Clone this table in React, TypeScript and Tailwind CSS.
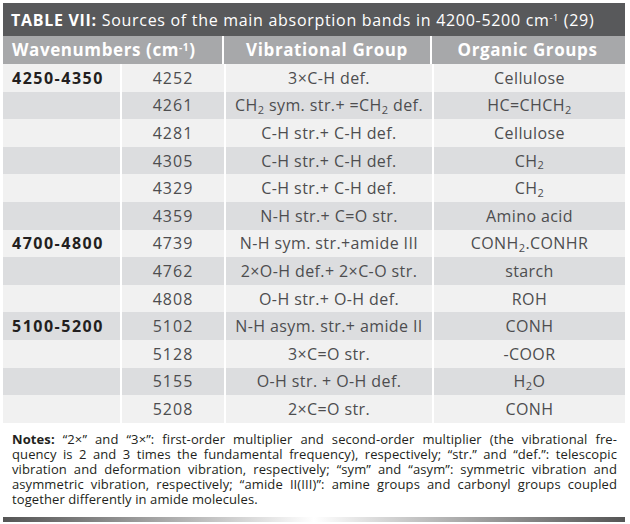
import React from 'react';

type Row = {
  range?: string;
  wave: string;
  vib: React.ReactNode;
  org: React.ReactNode;
};

const Sub = ({ children }: { children: React.ReactNode }) => (
  <sub className="text-[11px]">{children}</sub>
);

const rows: Row[] = [
  { range: '4250-4350', wave: '4252', vib: '3×C-H def.', org: 'Cellulose' },
  { wave: '4261', vib: <>CH<Sub>2</Sub> sym. str.+ =CH<Sub>2</Sub> def.</>, org: <>HC=CHCH<Sub>2</Sub></> },
  { wave: '4281', vib: 'C-H str.+ C-H def.', org: 'Cellulose' },
  { wave: '4305', vib: 'C-H str.+ C-H def.', org: <>CH<Sub>2</Sub></> },
  { wave: '4329', vib: 'C-H str.+ C-H def.', org: <>CH<Sub>2</Sub></> },
  { wave: '4359', vib: 'N-H str.+ C=O str.', org: 'Amino acid' },
  { range: '4700-4800', wave: '4739', vib: 'N-H sym. str.+amide III', org: <>CONH<Sub>2</Sub>.CONHR</> },
  { wave: '4762', vib: '2×O-H def.+ 2×C-O str.', org: 'starch' },
  { wave: '4808', vib: 'O-H str.+ O-H def.', org: 'ROH' },
  { range: '5100-5200', wave: '5102', vib: 'N-H asym. str.+ amide II', org: 'CONH' },
  { wave: '5128', vib: '3×C=O str.', org: '-COOR' },
  { wave: '5155', vib: 'O-H str. + O-H def.', org: <>H<Sub>2</Sub>O</> },
  { wave: '5208', vib: '2×C=O str.', org: 'CONH' },
];

const notes = [
  '“2×” and “3×”: first-order multiplier and second-order multiplier (the vibrational fre-',
  'quency is 2 and 3 times the fundamental frequency), respectively; “str.” and “def.”: telescopic',
  'vibration and deformation vibration, respectively; “sym” and “asym”: symmetric vibration and',
  'asymmetric vibration, respectively; “amide II(III)”: amine groups and carbonyl groups coupled',
  'together differently in amide molecules.',
];

export default function App() {
  return (
    <div className="w-[630px] h-[524px] bg-white pt-[3px] pl-[3px] pr-[5px] font-['Open_Sans',sans-serif]">
      {/* Title bar */}
      <div className="h-[33px] bg-[#58595b] text-white text-[16px] flex items-center pl-[8px] tracking-[0.7px]">
        <span className="font-bold">TABLE VII:</span>
        <span className="ml-[5px]">
          Sources of the main absorption bands in 4200-5200 cm<sup className="text-[9px]">-1</sup> (29)
        </span>
      </div>

      {/* Header */}
      <div className="grid grid-cols-[219px_2px_206px_2px_191px] h-[28px] bg-[#a7a8aa] text-white font-bold text-[17px] tracking-[0.6px]">
        <div className="flex items-center pl-[9px]">
          <span>
            Wavenumbers (cm<sup className="text-[10px]">-1</sup>)
          </span>
        </div>
        <div className="bg-white" />
        <div className="flex items-center justify-center">Vibrational Group</div>
        <div className="bg-white" />
        <div className="flex items-center justify-center">Organic Groups</div>
      </div>

      {/* Body */}
      <div className="grid grid-cols-[117px_102px_206px_191px] gap-x-[2px] text-[16px] tracking-[0.4px] text-[#4d4d4f]">
        {rows.map((r, i) => {
          const bg = i % 2 === 0 ? 'bg-[#f1f1f1]' : 'bg-[#dcdddf]';
          return (
            <React.Fragment key={i}>
              <div className={`${bg} h-[27.6px] flex items-center pl-[9px] font-bold tracking-[1.5px] text-[#231f20]`}>
                {r.range}
              </div>
              <div className={`${bg} h-[27.6px] flex items-center justify-center tracking-[1px]`}>{r.wave}</div>
              <div className={`${bg} h-[27.6px] flex items-center justify-center whitespace-nowrap`}>
                <span>{r.vib}</span>
              </div>
              <div className={`${bg} h-[27.6px] flex items-center justify-center whitespace-nowrap`}>
                <span>{r.org}</span>
              </div>
            </React.Fragment>
          );
        })}
      </div>

      {/* Notes */}
      <div className="pl-[9px] pr-[8px] pt-[9px] text-[13px] leading-[15px] tracking-[0.1px] text-[#231f20]">
        {notes.map((line, i) => (
          <div
            key={i}
            className={i < notes.length - 1 ? 'text-justify [text-align-last:justify] whitespace-nowrap' : 'whitespace-nowrap'}
          >
            {i === 0 && <span className="font-bold">Notes: </span>}
            {line}
          </div>
        ))}
      </div>

      <div className="mt-[10px] h-[5px] bg-gradient-to-r from-[#555555] via-[#ffffff] to-[#555555]" />
    </div>
  );
}
